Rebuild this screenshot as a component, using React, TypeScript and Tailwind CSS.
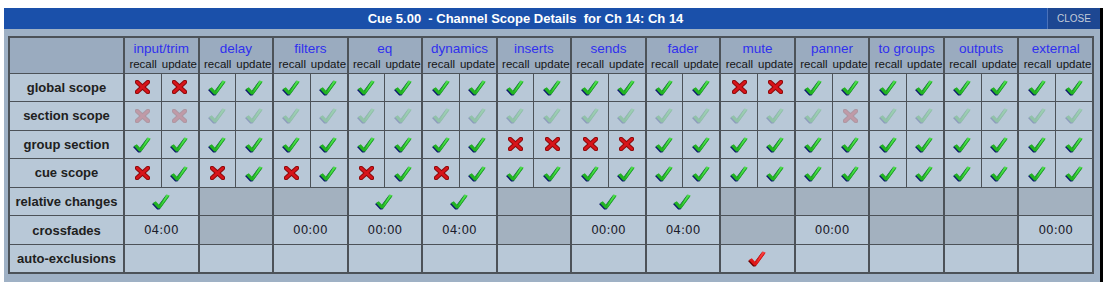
const groups = [
  "input/trim",
  "delay",
  "filters",
  "eq",
  "dynamics",
  "inserts",
  "sends",
  "fader",
  "mute",
  "panner",
  "to groups",
  "outputs",
  "external",
];

// c = check, x = cross; two per group (recall, update)
const scopeRows: { label: string; marks: string; faded?: boolean }[] = [
  { label: "global scope", marks: "xx cc cc cc cc cc cc cc xx cc cc cc cc" },
  { label: "section scope", marks: "xx cc cc cc cc cc cc cc cc cx cc cc cc", faded: true },
  { label: "group section", marks: "cc cc cc cc cc xx xx cc cc cc cc cc cc" },
  { label: "cue scope", marks: "xc xc xc xc xc cc cc cc cc cc cc cc cc" },
];

const relative = [1, 0, 0, 1, 1, 0, 1, 1, 0, 0, 0, 0, 0];
const crossfades = ["04:00", null, "00:00", "00:00", "04:00", null, "00:00", "04:00", null, "00:00", null, null, "00:00"];

function Check({ red = false }: { red?: boolean }) {
  const pts = "1,10 4,8.2 7.4,11.8 15.4,1 18.6,2.4 8.8,15.8 6.4,15.8";
  return (
    <svg width="19" height="17" viewBox="0 0 20 17" className="mx-auto block">
      <polygon points={pts} fill={red ? "#6a0000" : "#0c1a6e"} transform="translate(-1,1.2)" />
      <polygon points={pts} fill={red ? "#e01818" : "#22b322"} />
      <polygon points="15.4,1 18.6,2.4 17,3 8.4,14.4" fill={red ? "#ff5050" : "#5ef05e"} opacity="0.7" />
    </svg>
  );
}

function Cross() {
  return (
    <svg width="15" height="14" viewBox="0 0 15 14" className="mx-auto block">
      <g strokeLinecap="round">
        <line x1="2" y1="2" x2="13" y2="12" stroke="#8c0a0a" strokeWidth="4.4" />
        <line x1="13" y1="2" x2="2" y2="12" stroke="#8c0a0a" strokeWidth="4.4" />
        <line x1="2" y1="2" x2="13" y2="12" stroke="#d8141a" strokeWidth="2.4" />
        <line x1="13" y1="2" x2="2" y2="12" stroke="#d8141a" strokeWidth="2.4" />
      </g>
    </svg>
  );
}

const labelCell =
  "border-[1.5px] border-[#4c5258] text-center text-[13px] font-bold text-[#202020] h-[28.6px] p-0";

export default function App() {
  return (
    <div className="min-h-[283px] bg-white pl-[4px] pt-[8px] font-['Liberation_Sans',Arial,sans-serif]">
      <div className="flex w-[1099px]">
        <div className="w-[1096px]">
          <div className="flex h-[21px] bg-[#1a50aa]">
            <div className="flex flex-1 items-center justify-center whitespace-pre text-[13px] font-bold text-white">
              Cue 5.00  - Channel Scope Details  for Ch 14: Ch 14
            </div>
            <div className="flex w-[53px] items-center justify-center border-l border-[#4a72bb] bg-[#1d4792] text-[10px] text-[#c3cbd9]">
              CLOSE
            </div>
          </div>
          <div className="bg-[#9fb1c5] pb-[8px] pl-[4px] pr-[6px] pt-[7px]">
            <table className="w-[1086px] table-fixed border-collapse border-2 border-[#4c5258]">
              <colgroup>
                <col className="w-[115px]" />
                {Array.from({ length: 26 }).map((_, i) => (
                  <col key={i} />
                ))}
              </colgroup>
              <thead>
                <tr className="h-[36px] bg-[#9aabbf]">
                  <th className="border-[1.5px] border-[#4c5258] p-0" />
                  {groups.map((g) => (
                    <th
                      key={g}
                      colSpan={2}
                      className="border-x-2 border-b-[1.5px] border-[#4c5258] p-0 align-top font-normal"
                    >
                      <div className="pt-[3px] text-[13.5px] leading-[16px] text-[#3030ee]">{g}</div>
                      <div className="flex text-[11.5px] leading-[14px] text-[#141414]">
                        <span className="w-1/2 text-center">recall</span>
                        <span className="w-1/2 overflow-hidden whitespace-nowrap text-center">update</span>
                      </div>
                    </th>
                  ))}
                </tr>
              </thead>
              <tbody>
                {scopeRows.map((r) => {
                  const marks = r.marks.replace(/ /g, "").split("");
                  return (
                    <tr key={r.label} className="bg-[#b8c8d7]">
                      <td className={labelCell}>{r.label}</td>
                      {marks.map((m, i) => (
                        <td
                          key={i}
                          className={`h-[28.6px] border-y-[1.5px] border-[#4c5258] p-0 ${
                            i % 2 === 0 ? "border-l-2" : "border-l border-r-2"
                          }`}
                        >
                          <div className={r.faded ? "opacity-25" : ""}>{m === "c" ? <Check /> : <Cross />}</div>
                        </td>
                      ))}
                    </tr>
                  );
                })}
                <tr>
                  <td className={`${labelCell} bg-[#b8c8d7]`}>relative changes</td>
                  {relative.map((v, i) => (
                    <td
                      key={i}
                      colSpan={2}
                      className={`h-[28.6px] border-x-2 border-y-[1.5px] border-[#4c5258] p-0 ${
                        v ? "bg-[#b8c8d7]" : "bg-[#a3b1bf]"
                      }`}
                    >
                      {v ? <Check /> : null}
                    </td>
                  ))}
                </tr>
                <tr>
                  <td className={`${labelCell} bg-[#b8c8d7]`}>crossfades</td>
                  {crossfades.map((v, i) => (
                    <td
                      key={i}
                      colSpan={2}
                      className={`h-[28.6px] border-x-2 border-y-[1.5px] border-[#4c5258] p-0 text-center font-['DejaVu_Sans',sans-serif] text-[12px] text-[#1c1c2c] ${
                        v ? "bg-[#b8c8d7]" : "bg-[#a3b1bf]"
                      }`}
                    >
                      {v}
                    </td>
                  ))}
                </tr>
                <tr className="bg-[#b8c8d7]">
                  <td className={labelCell}>auto-exclusions</td>
                  {groups.map((g) => (
                    <td key={g} colSpan={2} className="h-[28.6px] border-x-2 border-y-[1.5px] border-[#4c5258] p-0">
                      {g === "mute" ? <Check red /> : null}
                    </td>
                  ))}
                </tr>
              </tbody>
            </table>
          </div>
        </div>
        <div className="w-[3px] bg-black" />
      </div>
    </div>
  );
}
